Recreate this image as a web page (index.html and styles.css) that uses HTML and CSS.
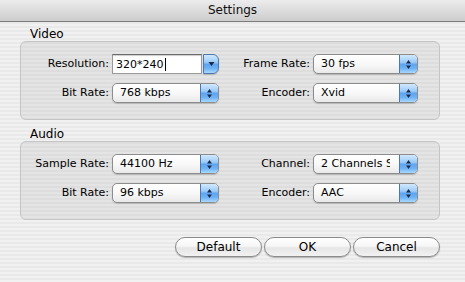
FILE: index.html
```html
<!DOCTYPE html>
<html lang="en">
<head>
  <meta charset="UTF-8" />
  <title>Settings</title>
  <link rel="stylesheet" href="styles.css">
</head>
<body>
  <div class="window">
    <div class="titlebar">Settings</div>

    <div class="content">
      <section class="group">
        <div class="group-title">Video</div>
        <div class="group-box">
          <label class="field-label">Resolution:</label>
          <div class="combo">
            <span class="combo-text">320*240<span class="caret"></span></span>
            <span class="combo-btn">
              <svg width="7" height="6" viewBox="0 0 7 6"><polygon points="0.5,1 6.5,1 3.5,5" /></svg>
            </span>
          </div>

          <label class="field-label">Frame Rate:</label>
          <div class="popup">
            <span class="popup-text">30 fps</span>
            <span class="popup-btn">
              <svg width="7" height="11" viewBox="0 0 7 11"><polygon points="1,4.5 3.5,1 6,4.5" /><polygon points="1,6.5 3.5,10 6,6.5" /></svg>
            </span>
          </div>

          <label class="field-label">Bit Rate:</label>
          <div class="popup">
            <span class="popup-text">768 kbps</span>
            <span class="popup-btn">
              <svg width="7" height="11" viewBox="0 0 7 11"><polygon points="1,4.5 3.5,1 6,4.5" /><polygon points="1,6.5 3.5,10 6,6.5" /></svg>
            </span>
          </div>

          <label class="field-label">Encoder:</label>
          <div class="popup">
            <span class="popup-text">Xvid</span>
            <span class="popup-btn">
              <svg width="7" height="11" viewBox="0 0 7 11"><polygon points="1,4.5 3.5,1 6,4.5" /><polygon points="1,6.5 3.5,10 6,6.5" /></svg>
            </span>
          </div>
        </div>
      </section>

      <section class="group audio">
        <div class="group-title">Audio</div>
        <div class="group-box">
          <label class="field-label">Sample Rate:</label>
          <div class="popup">
            <span class="popup-text">44100 Hz</span>
            <span class="popup-btn">
              <svg width="7" height="11" viewBox="0 0 7 11"><polygon points="1,4.5 3.5,1 6,4.5" /><polygon points="1,6.5 3.5,10 6,6.5" /></svg>
            </span>
          </div>

          <label class="field-label">Channel:</label>
          <div class="popup">
            <span class="popup-text">2 Channels Stereo</span>
            <span class="popup-btn">
              <svg width="7" height="11" viewBox="0 0 7 11"><polygon points="1,4.5 3.5,1 6,4.5" /><polygon points="1,6.5 3.5,10 6,6.5" /></svg>
            </span>
          </div>

          <label class="field-label">Bit Rate:</label>
          <div class="popup">
            <span class="popup-text">96 kbps</span>
            <span class="popup-btn">
              <svg width="7" height="11" viewBox="0 0 7 11"><polygon points="1,4.5 3.5,1 6,4.5" /><polygon points="1,6.5 3.5,10 6,6.5" /></svg>
            </span>
          </div>

          <label class="field-label">Encoder:</label>
          <div class="popup">
            <span class="popup-text">AAC</span>
            <span class="popup-btn">
              <svg width="7" height="11" viewBox="0 0 7 11"><polygon points="1,4.5 3.5,1 6,4.5" /><polygon points="1,6.5 3.5,10 6,6.5" /></svg>
            </span>
          </div>
        </div>
      </section>

      <div class="buttons">
        <button type="button" class="btn">Default</button>
        <button type="button" class="btn">OK</button>
        <button type="button" class="btn">Cancel</button>
      </div>
    </div>
  </div>
</body>
</html>
```

FILE: styles.css
```css
body {
  margin: 0;
  padding: 0;
  font-family: 'DejaVu Sans', 'Liberation Sans', sans-serif;
  color: #000;
}

.window {
  width: 465px;
  height: 282px;
  background: repeating-linear-gradient(#f1f1f1 0, #f1f1f1 2px, #e9e9e9 2px, #e9e9e9 4px);
  overflow: hidden;
}

.titlebar {
  height: 21px;
  line-height: 21px;
  border-bottom: 1px solid #7b7b7b;
  background: linear-gradient(#ececec, #d9d9d9 60%, #cdcdcd);
  text-align: center;
  font-size: 12px;
  color: #111;
}

.content {
  padding: 0 25px 0 20px;
}

.group {
  margin-top: 5px;
}

.group.audio {
  margin-top: 7px;
}

.group-title {
  margin-left: 10px;
  height: 14px;
  line-height: 14px;
  font-size: 12px;
}

.group-box {
  display: grid;
  grid-template-columns: 88px 107px 88px 105px;
  column-gap: 3px;
  row-gap: 9px;
  padding: 12px 0 16px 0;
  border: 1px solid #c4c4c4;
  border-radius: 6px;
  background: rgba(0, 0, 0, 0.05);
}

.field-label {
  text-align: right;
  font-size: 11px;
  line-height: 20px;
  white-space: nowrap;
}

.popup {
  display: flex;
  height: 20px;
  box-sizing: border-box;
  border: 1px solid #8c8c8c;
  border-radius: 5px;
  background: linear-gradient(#ffffff, #f7f7f7 55%, #e9e9e9);
  box-shadow: 0 1px 1px rgba(0, 0, 0, 0.18);
  overflow: hidden;
}

.popup-text {
  flex: 1;
  min-width: 0;
  margin-right: 9px;
  padding-left: 7px;
  font-size: 11px;
  line-height: 18px;
  white-space: nowrap;
  overflow: hidden;
}

.popup-btn,
.combo-btn {
  width: 17px;
  display: flex;
  align-items: center;
  justify-content: center;
  border-left: 1px solid #4f77ae;
  background: linear-gradient(#d2e8fd 0, #9ccbf8 40%, #5ea4ef 52%, #6fb3f5 75%, #a8d8fd 100%);
}

.popup-btn svg polygon,
.combo-btn svg polygon {
  fill: #1b2b4c;
}

.combo {
  display: flex;
  height: 20px;
}

.combo-text {
  flex: 1;
  display: flex;
  align-items: center;
  box-sizing: border-box;
  padding-left: 3px;
  margin-right: 1px;
  border: 1px solid #9a9a9a;
  border-top-color: #6a6a6a;
  background: #fff;
  box-shadow: inset 0 1px 1px rgba(0, 0, 0, 0.2);
  font-size: 11px;
}

.caret {
  width: 1px;
  height: 13px;
  margin-left: 1px;
  background: #000;
}

.combo-btn {
  width: 16px;
  box-sizing: border-box;
  border: 1px solid #4f77ae;
  border-radius: 0 6px 6px 0;
  box-shadow: 0 1px 1px rgba(0, 0, 0, 0.18);
}

.buttons {
  display: flex;
  justify-content: flex-end;
  gap: 2px;
  margin-top: 17px;
}

.btn {
  width: 87px;
  height: 20px;
  padding: 0;
  border: 1px solid #8a8a8a;
  border-radius: 10px;
  background: linear-gradient(#ffffff 0, #f6f6f6 45%, #e6e6e6 55%, #f2f2f2 100%);
  box-shadow: 0 1px 1px rgba(0, 0, 0, 0.25);
  font-family: 'DejaVu Sans', 'Liberation Sans', sans-serif;
  font-size: 12px;
  color: #000;
}
```
